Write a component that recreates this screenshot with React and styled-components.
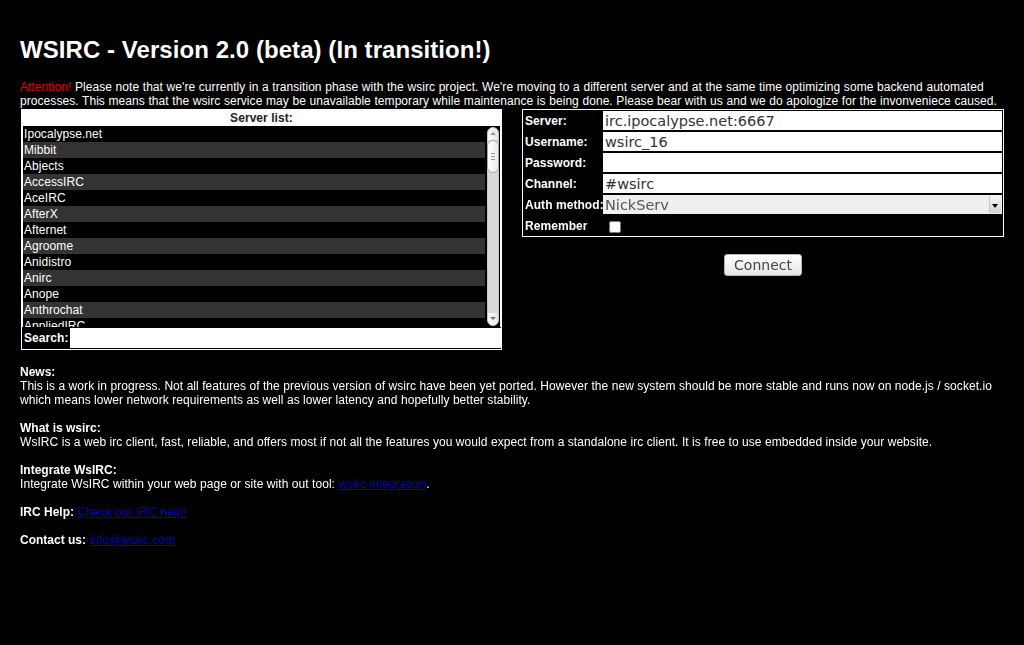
import React, { useState } from "react";
import styled, { createGlobalStyle } from "styled-components";

const GlobalStyle = createGlobalStyle`
  html, body {
    margin: 0;
    padding: 0;
    background: #000;
  }
  body {
    color: #fff;
    font-family: "Liberation Sans", Arial, sans-serif;
    font-size: 12px;
    letter-spacing: 0.06px;
  }
`;

const Page = styled.div`
  padding: 0 20px;
  min-height: 645px;
  box-sizing: border-box;
`;

const Title = styled.h1`
  font-size: 24px;
  font-weight: bold;
  margin: 0;
  padding: 36px 0 16px;
  line-height: 28px;
`;

const Notice = styled.p`
  margin: 0 0 1px;
  line-height: 14px;
  word-spacing: 0.2px;
`;

const Attention = styled.span`
  color: #e00000;
`;

const Columns = styled.div`
  display: grid;
  grid-template-columns: 481px 482px;
  column-gap: 20px;
  padding-left: 1px;
  align-items: start;
`;

const ListPanel = styled.div`
  border: 1px solid #fff;
  background: #fff;
  display: flex;
  flex-direction: column;
`;

const ListHeader = styled.div`
  height: 16px;
  line-height: 16px;
  text-align: center;
  font-weight: bold;
  color: #222;
`;

const ListBox = styled.div`
  display: flex;
  height: 201px;
  margin: 0 1px;
  background: #000;
`;

const ServerRows = styled.div`
  flex: 1;
  overflow-y: auto;
  scrollbar-width: none;
  &::-webkit-scrollbar {
    display: none;
  }
`;

const ServerItem = styled.div`
  height: 16px;
  line-height: 16px;
  padding-left: 1px;
  color: #fff;
  cursor: pointer;
  background: ${({ odd, active }) => (active ? "#1f3a70" : odd ? "#333" : "#000")};
`;

const ScrollBar = styled.div`
  width: 12px;
  margin: 1px 1px 1px 2px;
  border-radius: 6px;
  background: #d9d9d9;
  border: 1px solid #c4c4c4;
  position: relative;
  box-sizing: border-box;
`;

const ScrollButton = styled.div`
  position: absolute;
  left: 0;
  right: 0;
  height: 12px;
  ${({ down }) => (down ? "bottom: 0;" : "top: 0;")}
  border-radius: ${({ down }) => (down ? "0 0 6px 6px" : "6px 6px 0 0")};
  background: linear-gradient(90deg, #fbfbfb, #e6e6e6);

  &::after {
    content: "";
    position: absolute;
    left: 2px;
    top: 4px;
    border-left: 3px solid transparent;
    border-right: 3px solid transparent;
    ${({ down }) =>
      down ? "border-top: 3px solid #777;" : "border-bottom: 3px solid #999;"}
  }
`;

const ScrollThumb = styled.div`
  position: absolute;
  left: -1px;
  right: -1px;
  border: 1px solid #a9a9a9;
  border-radius: 6px;
  background: linear-gradient(90deg, #ffffff, #ececec);
  display: flex;
  flex-direction: column;
  align-items: center;
  justify-content: center;
  gap: 2px;
`;

const Grip = styled.span`
  width: 4px;
  height: 1px;
  background: #999;
`;

const SearchRow = styled.div`
  display: flex;
  align-items: center;
  background: #000;
  height: 21px;
  padding: 0 0 1px 1px;
`;

const SearchLabel = styled.label`
  font-weight: bold;
  color: #fff;
  padding: 0 2px 0 1px;
`;

const SearchInput = styled.input`
  flex: 1;
  height: 20px;
  border: none;
  outline: none;
  background: #fff;
  padding: 0 2px;
  box-sizing: border-box;
  font-family: "DejaVu Sans", sans-serif;
  font-size: 13px;
`;

const RightColumn = styled.div`
  display: flex;
  flex-direction: column;
  align-items: center;
`;

const FormPanel = styled.div`
  width: 100%;
  box-sizing: border-box;
  border: 1px solid #fff;
  padding: 1px;
  display: grid;
  grid-template-columns: 79px 1fr;
  grid-auto-rows: 19px;
  row-gap: 2px;
  align-items: center;
`;

const FieldLabel = styled.label`
  font-weight: bold;
  color: #fff;
  padding-left: 1px;
  white-space: nowrap;
`;

const TextInput = styled.input`
  height: 19px;
  width: 100%;
  box-sizing: border-box;
  border: none;
  outline: none;
  background: #fff;
  color: #333;
  padding: 0 1px 0 2px;
  font-family: "DejaVu Sans", sans-serif;
  font-size: 14.5px;
  letter-spacing: 0;
`;

const SelectWrap = styled.div`
  position: relative;
  height: 19px;
`;

const Select = styled.select`
  appearance: none;
  width: 100%;
  height: 19px;
  border: none;
  outline: none;
  background: #efefef;
  color: #555;
  padding: 0 1px 0 2px;
  font-family: "DejaVu Sans", sans-serif;
  font-size: 14.5px;
`;

const SelectArrow = styled.span`
  position: absolute;
  right: 1px;
  top: 1px;
  width: 11px;
  height: 17px;
  background: linear-gradient(#f6f6f6, #d2d2d2);
  border-left: 1px solid #c8c8c8;
  pointer-events: none;

  &::after {
    content: "";
    position: absolute;
    left: 2px;
    top: 8px;
    border-left: 3px solid transparent;
    border-right: 3px solid transparent;
    border-top: 4px solid #000;
  }
`;

const CheckCell = styled.div`
  display: flex;
  align-items: center;
  height: 19px;
`;

const Checkbox = styled.input`
  margin: 3px 0 0 6px;
  width: 12px;
  height: 12px;
`;

const ConnectButton = styled.button`
  margin-top: 17px;
  width: 78px;
  height: 22px;
  border: 1px solid #b5b5b5;
  border-radius: 3px;
  background: linear-gradient(#ffffff, #e6e6e6);
  color: #444;
  font-family: "DejaVu Sans", sans-serif;
  font-size: 14px;
  cursor: pointer;
`;

const InfoArea = styled.div`
  padding-top: 15px;
`;

const Section = styled.div`
  line-height: 14px;
  margin-bottom: 14px;
`;

const SectionTitle = styled.span`
  font-weight: bold;
  letter-spacing: 0;
`;

const Link = styled.a`
  color: #0000c8;
  text-decoration: underline;
`;

const servers = [
  "Ipocalypse.net", "Mibbit", "Abjects", "AccessIRC", "AceIRC", "AfterX",
  "Afternet", "Agroome", "Anidistro", "Anirc", "Anope", "Anthrochat",
  "AppliedIRC", "Arcnet", "ArtWorkIRC", "Ayochat", "AzzurraNet", "Beyondirc",
  "BitlBee", "Blitzed", "Brasnet", "Chat4all", "ChatJunkies", "ChatSpike",
  "Coldfront", "Criten", "DALnet", "Darkmyst", "DejaToons", "DeepIRC",
  "Efnet", "EnterTheGame", "EsperNet", "EUIRC", "Evolu.net", "FDFNet",
  "Freenode", "GameSurge", "GeekShed", "German-Elite", "GIMPNet", "GlobalGamers",
  "Hashmark", "IdleMonkeys", "IRC4Fun", "IRCHighway", "IRCnet", "IRCSource",
  "Irctoo", "KickChat", "Konfido", "Krono", "LinkNet", "Magicstar",
  "Mozilla", "OFTC", "OtherNet", "Oz.org", "P2P-NET", "PTlink",
  "PTnet", "QuakeNet", "Rizon", "RusNet", "SceneP2P", "Serenity-IRC",
  "SlashNET", "Snoonet", "SorceryNet", "SpotChat", "StarChat", "Undernet",
];

const VIEW = 201;
const TRACK = 199 - 24;

export default function App() {
  const [search, setSearch] = useState("");
  const [selected, setSelected] = useState(null);
  const [scroll, setScroll] = useState(0);
  const shown = servers.filter((s) => s.toLowerCase().includes(search.toLowerCase()));

  const total = Math.max(shown.length * 16, VIEW);
  const thumbH = Math.max(Math.round((TRACK * VIEW) / total), 20);
  const maxScroll = total - VIEW;
  const thumbTop = 12 + (maxScroll > 0 ? Math.round(((TRACK - thumbH) * scroll) / maxScroll) : 0);

  return (
    <Page>
      <GlobalStyle />
      <Title>WSIRC - Version 2.0 (beta) (In transition!)</Title>
      <Notice>
        <Attention>Attention!</Attention> Please note that we're currently in a transition phase with the wsirc project. We're moving to a different server and at the same time optimizing some backend automated processes. This means that the wsirc service may be unavailable temporary while maintenance is being done. Please bear with us and we do apologize for the invonveniece caused.
      </Notice>

      <Columns>
        <ListPanel>
          <ListHeader>Server list:</ListHeader>
          <ListBox>
            <ServerRows onScroll={(e) => setScroll(e.currentTarget.scrollTop)}>
              {shown.map((s, i) => (
                <ServerItem key={s} odd={i % 2 === 1} active={selected === s} onClick={() => setSelected(s)}>
                  {s}
                </ServerItem>
              ))}
            </ServerRows>
            <ScrollBar>
              <ScrollButton />
              <ScrollThumb style={{ top: thumbTop, height: thumbH }}>
                <Grip />
                <Grip />
                <Grip />
              </ScrollThumb>
              <ScrollButton down />
            </ScrollBar>
          </ListBox>
          <SearchRow>
            <SearchLabel htmlFor="search">Search:</SearchLabel>
            <SearchInput id="search" value={search} onChange={(e) => setSearch(e.target.value)} />
          </SearchRow>
        </ListPanel>

        <RightColumn>
          <FormPanel>
            <FieldLabel>Server:</FieldLabel>
            <TextInput defaultValue="irc.ipocalypse.net:6667" />
            <FieldLabel>Username:</FieldLabel>
            <TextInput defaultValue="wsirc_16" />
            <FieldLabel>Password:</FieldLabel>
            <TextInput type="password" />
            <FieldLabel>Channel:</FieldLabel>
            <TextInput defaultValue="#wsirc" />
            <FieldLabel>Auth method:</FieldLabel>
            <SelectWrap>
              <Select defaultValue="NickServ">
                <option>NickServ</option>
                <option>None</option>
                <option>Q</option>
              </Select>
              <SelectArrow />
            </SelectWrap>
            <FieldLabel>Remember</FieldLabel>
            <CheckCell>
              <Checkbox type="checkbox" />
            </CheckCell>
          </FormPanel>
          <ConnectButton>Connect</ConnectButton>
        </RightColumn>
      </Columns>

      <InfoArea>
        <Section>
          <SectionTitle>News:</SectionTitle>
          <br />
          This is a work in progress. Not all features of the previous version of wsirc have been yet ported. However the new system should be more stable and runs now on node.js / socket.io which means lower network requirements as well as lower latency and hopefully better stability.
        </Section>
        <Section>
          <SectionTitle>What is wsirc:</SectionTitle>
          <br />
          WsIRC is a web irc client, fast, reliable, and offers most if not all the features you would expect from a standalone irc client. It is free to use embedded inside your website.
        </Section>
        <Section>
          <SectionTitle>Integrate WsIRC:</SectionTitle>
          <br />
          Integrate WsIRC within your web page or site with out tool: <Link href="#">wsirc integration</Link>.
        </Section>
        <Section>
          <SectionTitle>IRC Help:</SectionTitle> <Link href="#">Check our IRC help!</Link>
        </Section>
        <Section>
          <SectionTitle>Contact us:</SectionTitle> <Link href="#">info@wsirc.com</Link>
        </Section>
      </InfoArea>
    </Page>
  );
}
